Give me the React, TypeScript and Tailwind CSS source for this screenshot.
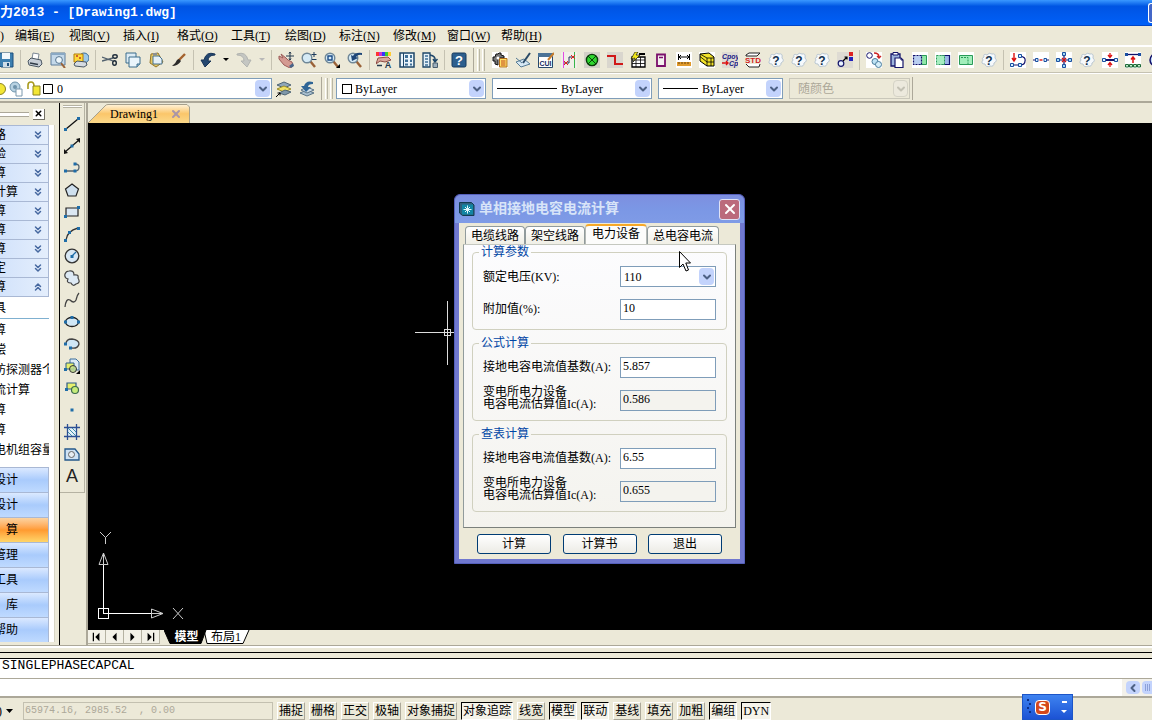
import React from 'react';
import { ChevronDown, ChevronLeft, ChevronsDown, ChevronsUp, X } from 'lucide-react';

const HelpCloud = () => (
  <>
    <path d="M3 5Q2 1 6 3Q8 0 11 2Q15 1 14 6Q17 9 13 11Q13 15 9 14Q5 16 4 12Q-1 12 2 8Q0 6 3 5Z" fill="#f6f9fc" stroke="#b9c6d0" />
    <text x="8" y="12.500" textAnchor="middle" fill="#12304e" className="text-[12px] font-bold font-['Liberation_Sans',sans-serif]">
      ?
    </text>
  </>
);

const Magnifier = () => (
  <>
    <path d="M9.500 9.500L14 15" stroke="#9a6238" strokeWidth="2.400" />
    <circle cx="6" cy="6" r="4.800" fill="#d5eaf5" stroke="#6f8797" strokeWidth="1.400" />
  </>
);

const icons: Record<string, React.ReactNode> = {
  save: (
    <>
      <path d="M1 1H15V15H3L1 13Z" fill="#3d7fb0" stroke="#1d4f7c" />
      <path d="M4 1H12V7H4Z" fill="#f2f8fc" />
      <path d="M5 10H12V15H5Z" fill="#cfdde8" />
      <path d="M9 11H11V14H9Z" fill="#1d4f7c" />
    </>
  ),
  print: (
    <>
      <path d="M5 7L6 1L12 2L11 8Z" fill="#fff" stroke="#7c8894" />
      <path d="M1 9L4 6L14 8L15 12L12 15L2 13Z" fill="#c7ced6" stroke="#4b5763" />
      <path d="M3 11L11 12.500" stroke="#2f3a46" strokeWidth="1.500" />
    </>
  ),
  preview: (
    <>
      <path d="M1 1H15V13H1Z" fill="#c4d9ea" stroke="#5c7d9b" />
      <path d="M1 1H15V3H1Z" fill="#8aa9c4" />
      <path d="M11 11L15 16" stroke="#9a6238" strokeWidth="2" />
      <circle cx="9" cy="8" r="3.400" fill="#eef7fc" stroke="#54748e" />
    </>
  ),
  plot: (
    <>
      <circle cx="11" cy="6" r="5" fill="#9cc9ea" stroke="#3c6d98" />
      <path d="M1 2H10V10H1Z" fill="#ffd83a" stroke="#b37d08" />
      <path d="M3 4H5M6 6H8" stroke="#c0392b" strokeWidth="1.500" />
      <path d="M1 12L4 9L13 10L14 13L11 15L2 14Z" fill="#d5dbe1" stroke="#4b5763" />
    </>
  ),
  cut: (
    <>
      <path d="M0 5L11 9M0 9L11 6" stroke="#53626f" strokeWidth="1.300" />
      <ellipse cx="13" cy="4.500" rx="2.200" ry="1.700" fill="none" stroke="#1e2c3a" strokeWidth="1.400" />
      <ellipse cx="12.500" cy="11" rx="1.800" ry="2.200" fill="none" stroke="#1e2c3a" strokeWidth="1.400" />
    </>
  ),
  copy: (
    <>
      <path d="M1 1H11V11H1Z" fill="#dcebf4" stroke="#3a6c8c" />
      <path d="M4 5H15V12L12 15H4Z" fill="#eaf5fb" stroke="#3a6c8c" />
      <path d="M15 12H12V15" fill="#9bbccf" stroke="#3a6c8c" />
    </>
  ),
  paste: (
    <>
      <path d="M3 2L10 1L15 10L8 15L2 11Z" fill="#e7c763" stroke="#94762a" />
      <path d="M5 4H11L14 7V12H5Z" fill="#e6f1f8" stroke="#47708c" />
      <path d="M5 1H9V3H5Z" fill="#8c8f94" />
    </>
  ),
  brush: (
    <>
      <path d="M14 2L7 9" stroke="#a4622e" strokeWidth="2.400" />
      <path d="M8 7L10 9Q7 14 1 14Q5 11 6 8Z" fill="#2b2b2b" />
    </>
  ),
  undo: <path d="M15 2Q6 -1 4 8H1L5 15L11 9H8Q8 3 15 3Z" fill="#24476f" stroke="#183457" />,
  redo: <path d="M1 2Q10 -1 12 8H15L11 15L5 9H8Q8 3 1 3Z" fill="#c4c6c2" stroke="#b2b4b0" />,
  pan: (
    <>
      <path d="M1 4L5 6L3 2L8 6L10 8L14 10L15 14L12 16L6 13L1 7Z" fill="#d49a92" stroke="#9c5b58" />
      <path d="M11 14L15 11L16 14L13 16Z" fill="#47658a" />
      <path d="M12 0V8M8 4H16M11 1.500L12 0L13 1.500M11 6.500L12 8L13 6.500" stroke="#24384c" fill="none" />
    </>
  ),
  zoom: (
    <>
      <Magnifier />
      <path d="M13 0V5M10.500 2.500H15.500M11 7.500H15.500" stroke="#1c3b5c" />
    </>
  ),
  zoomWindow: (
    <>
      <Magnifier />
      <path d="M4 4H8V8H4Z" fill="none" stroke="#1b4c88" strokeWidth="1.400" />
      <path d="M16 12V16H12Z" fill="#000" />
    </>
  ),
  zoomPrevious: (
    <>
      <Magnifier />
      <path d="M15 1Q8 0 6 4L4 3L5 9L11 6L9 5Q11 2 15 3Z" fill="#1e4678" />
    </>
  ),
  properties: (
    <>
      <path d="M0 0H3V4H0Z" fill="#f33" />
      <path d="M3 0H6V4H3Z" fill="#c3c" />
      <path d="M6 0H9V4H6Z" fill="#33f" />
      <path d="M9 0H12V4H9Z" fill="#3c3" />
      <path d="M12 0H15V4H12Z" fill="#fc3" />
      <path d="M2 6L12 5L15 8L9 10L4 9L0 12Z" fill="#d9a89c" stroke="#8e4c45" />
      <path d="M1 13.500H6" stroke="#24384c" strokeWidth="1.500" />
      <text x="12" y="16" textAnchor="middle" fill="#24384c" className="text-[9px] font-bold font-['Liberation_Sans',sans-serif]">
        A
      </text>
    </>
  ),
  design: (
    <>
      <path d="M1 1H15V15H1Z" fill="#eaf4fb" stroke="#1d4568" strokeWidth="1.500" />
      <path d="M4.500 1V15" stroke="#1d4568" />
      <path d="M6 3H9V6H6ZM11 3H13V6H11ZM6 7.500H9V10H6ZM11 7.500H13V10H11ZM6 11.500H9V13.500H6ZM11 11.500H13V13.500H11Z" fill="#3e6f97" />
    </>
  ),
  toolPalette: (
    <>
      <path d="M1 1H8V15H1Z" fill="#e4f0f8" stroke="#1d4568" strokeWidth="1.300" />
      <path d="M3 4H6M3 7H6M3 10H6M3 13H6" stroke="#3e6f97" strokeWidth="1.500" />
      <path d="M8 3Q14 4 13 9M11 7L13 10L15.500 7" fill="none" stroke="#1d4568" strokeWidth="1.500" />
      <path d="M11 11H15.500V15.500H11Z" fill="#9eb0bd" stroke="#4b5f6e" />
    </>
  ),
  help: (
    <>
      <rect x="1" y="1" width="14" height="14" rx="1.500" fill="#2d5f8e" stroke="#163a5e" />
      <text x="8" y="13" textAnchor="middle" fill="#fff" className="text-[13px] font-bold font-['Liberation_Sans',sans-serif]">
        ?
      </text>
    </>
  ),
  settings: (
    <>
      <path d="M0 0H16V16H0Z" fill="#fff" />
      <path d="M1 5H3L4 2H6L7 1H9V3L12 4V6H6V13L3 12V9H1Z" fill="#777" stroke="#111" />
      <circle cx="6" cy="6" r="1.500" fill="#fff" />
      <path d="M7.500 6.500H15V15H7.500Z" fill="#ffe067" stroke="#b06d19" />
      <path d="M9 9H13.500M9 11H13.500M9 13H13.500" stroke="#c04820" />
    </>
  ),
  sketch: (
    <>
      <path d="M1 10L9 7L15 12L6 15Z" fill="#d6e8f4" stroke="#567b95" />
      <path d="M15 1L8 11" stroke="#2a4a66" strokeWidth="2" />
      <path d="M1 6L7 11" stroke="#567b95" />
    </>
  ),
  cui: (
    <>
      <path d="M.5 1.500H14.500V15.500H.5Z" fill="#fff" stroke="#27496d" />
      <path d="M0 1H15V5H0Z" fill="#4b7397" />
      <text x="7.500" y="14" textAnchor="middle" fill="#142b5e" className="text-[7px] font-bold font-['Liberation_Sans',sans-serif]">
        CUI
      </text>
      <path d="M16 1L10 8" stroke="#c77d2d" strokeWidth="2" />
    </>
  ),
  signal: (
    <>
      <path d="M0 0H16V16H0Z" fill="#f1efe8" />
      <path d="M2.500 0V16" stroke="#e24be2" />
      <path d="M13.500 0V16" stroke="#39b54a" />
      <path d="M3 11H8V5H13" fill="none" stroke="#20325a" />
      <path d="M3 9L7 13M7 9L3 13M10 3L14 7M14 3L10 7" stroke="#d22" />
    </>
  ),
  lamp: (
    <>
      <path d="M0 0H16V16H0Z" fill="#d3d0c8" />
      <circle cx="8" cy="8" r="5.600" fill="#2fd62f" stroke="#0a3d0a" strokeWidth="1.400" />
      <path d="M4 4L12 12M12 4L4 12" stroke="#0a3d0a" />
    </>
  ),
  wire: (
    <>
      <path d="M0 0H16V16H0Z" fill="#d9d6ce" />
      <path d="M0 4H8V12H16" fill="none" stroke="#d01818" strokeWidth="2" />
    </>
  ),
  table: (
    <>
      <path d="M2 5H15V15H2Z" fill="#fff" stroke="#000" strokeWidth="1.300" />
      <path d="M2 8H15M2 11.500H15M6 5V15M10.500 5V15" stroke="#000" strokeWidth=".8" />
      <path d="M5 0L1 7L5 6L3 10L10 3H6L8 0Z" fill="#f2e91c" stroke="#000" strokeWidth=".6" />
      <path d="M9 2H15" stroke="#000" strokeWidth="2" />
    </>
  ),
  socket: (
    <>
      <path d="M4 2.500H12V14H4Z" fill="#f4f0ef" stroke="#7b0f6b" strokeWidth="1.800" />
      <path d="M6 5.500H10" stroke="#7b0f6b" strokeWidth="1.500" />
    </>
  ),
  measure: (
    <>
      <path d="M0 0H16V16H0Z" fill="#fff" />
      <path d="M2.500 2V8M13.500 2V8M3 5H13M5 3L3 5L5 7M11 3L13 5L11 7" fill="none" stroke="#000" />
      <path d="M1 10H15V14H1Z" fill="#e09a2c" />
      <path d="M3 10V12M6 10V12M9 10V12M12 10V12" stroke="#6b430b" />
    </>
  ),
  layers: (
    <>
      <path d="M0 0H16V16H0Z" fill="#fff" />
      <path d="M1 2L10 1L15 5V14H8L1 9Z" fill="#f3e328" stroke="#000" />
      <path d="M1 4.500L8 10H15M1 2L8 6H15M8 6V14M12 6V14" fill="none" stroke="#000" strokeWidth=".8" />
    </>
  ),
  copyProps: (
    <>
      <path d="M0 0H16V16H0Z" fill="#dedbd3" />
      <text x="0" y="7" fill="#1a1a86" className="text-[7px] italic font-bold font-['Liberation_Sans',sans-serif]">
        Cpoy
      </text>
      <path d="M0 11H6M4 9L6 11L4 13" fill="none" stroke="#d11" strokeWidth="1.400" />
      <text x="7" y="14" fill="#1a1a86" className="text-[7px] italic font-bold font-['Liberation_Sans',sans-serif]">
        Cp
      </text>
    </>
  ),
  standard: (
    <>
      <path d="M1 3L4 1H15L12 4H1ZM1 12L4 15H14L15 12" fill="#fff" stroke="#222" />
      <text x="8" y="11" textAnchor="middle" fill="#d01f1f" className="text-[8px] font-bold font-['Liberation_Sans',sans-serif]">
        STD
      </text>
    </>
  ),
  cloud: <HelpCloud />,
  nodes: (
    <>
      <path d="M0 0H16V16H0Z" fill="#dedbd3" />
      <circle cx="4" cy="11.500" r="2.800" fill="#e9f3ff" stroke="#16166b" strokeWidth="1.200" />
      <path d="M6 9L10 5M7.500 5H10V7.500" fill="none" stroke="#000" strokeWidth="1.200" />
      <path d="M12 0H16V4H12Z" fill="#d22" />
      <path d="M12 5H16V9H12Z" fill="#22b" />
    </>
  ),
  replace: (
    <>
      <path d="M0 0H16V16H0Z" fill="#fff" />
      <circle cx="3.500" cy="3.500" r="2.800" fill="#fff" stroke="#16166b" />
      <path d="M8 1Q13 1 13 5M11 4L13 6L15 4" fill="none" stroke="#c22" strokeWidth="1.300" />
      <circle cx="9" cy="9.500" r="3" fill="#bfe3f4" stroke="#4a7c9c" />
      <circle cx="12.500" cy="12.500" r="3" fill="#d5eef9" stroke="#4a7c9c" />
    </>
  ),
  clipboard: (
    <>
      <path d="M2 2H11V14H2Z" fill="#9db4dc" stroke="#16166b" strokeWidth="1.300" />
      <path d="M4 .5H9V3H4Z" fill="#fff" stroke="#16166b" />
      <path d="M6 6H12L14 8V15.500H6Z" fill="#fff" stroke="#16166b" strokeWidth="1.200" />
      <path d="M12 6V8H14" fill="none" stroke="#16166b" />
    </>
  ),
  blockA: (
    <>
      <path d="M0 0H16V16H0Z" fill="#fff" />
      <path d="M8 3.500H14.500V12.500H8Z" fill="#8fe6a8" stroke="#2a9a58" />
      <path d="M1.500 3.500H9.500V12.500H1.500Z" fill="#b9cef0" stroke="#10106a" strokeDasharray="2 1" strokeWidth="1.200" />
    </>
  ),
  blockB: (
    <>
      <path d="M0 0H16V16H0Z" fill="#fff" />
      <path d="M7 3.500H14.500V12.500H7Z" fill="#9cb6e6" stroke="#10106a" strokeWidth="1.200" />
      <path d="M1.500 3.500H9.500V12.500H1.500Z" fill="#a6eec0" stroke="#2a9a58" strokeDasharray="2 1" />
    </>
  ),
  blockC: (
    <>
      <path d="M0 0H16V16H0Z" fill="#fff" />
      <path d="M1.500 3.500H14.500V12.500H1.500Z" fill="#a2eebb" stroke="#2a9a58" />
      <path d="M3 5.500H10V12" fill="none" stroke="#2a9a58" strokeDasharray="2 1" />
    </>
  ),
  loop: (
    <>
      <path d="M0 0H16V16H0Z" fill="#fff" />
      <path d="M4 1V8M2 6L4 9L6 6" fill="none" stroke="#d11" strokeWidth="1.400" />
      <path d="M10 4Q16 5 15 9Q15 13 10 13H3" fill="none" stroke="#10106a" strokeWidth="1.200" />
      <path d="M8.500 2.500H11.500V5.500H8.500ZM.5 11.500H3.500V14.500H.5ZM8.500 11.500H11.500V14.500H8.500Z" fill="#d8f1ff" stroke="#1a4fa0" />
    </>
  ),
  dashNode: (
    <>
      <path d="M0 0H16V16H0Z" fill="#fff" />
      <path d="M0 8H5M11 8H16" stroke="#10106a" />
      <path d="M6.500 8H9.500" stroke="#d11" strokeWidth="1.400" />
      <path d="M2.500 6.500H5V9.500H2.500ZM11 6.500H13.500V9.500H11Z" fill="#d8f1ff" stroke="#1a4fa0" />
    </>
  ),
  crossNode: (
    <>
      <path d="M0 0H16V16H0Z" fill="#fff" />
      <path d="M8 2V14M2 8H14" stroke="#10106a" strokeWidth="1.200" />
      <path d="M6 6L10 10M10 6L6 10" stroke="#d11" strokeWidth="1.200" />
      <path d="M6.500 .5H9.500V3.500H6.500ZM6.500 12.500H9.500V15.500H6.500ZM.5 6.500H3.500V9.500H.5ZM12.500 6.500H15.500V9.500H12.500Z" fill="#9fd9f4" stroke="#1a4fa0" />
    </>
  ),
  splitNode: (
    <>
      <path d="M0 0H16V16H0Z" fill="#fff" />
      <path d="M2 8H14" stroke="#10106a" strokeWidth="2" />
      <path d="M8 1V5M6 3L8 5.500L10 3M8 15V11M6 13L8 10.500L10 13" fill="none" stroke="#d11" strokeWidth="1.300" />
      <path d="M.5 6.500H3.500V9.500H.5ZM12.500 6.500H15.500V9.500H12.500Z" fill="#d8f1ff" stroke="#1a4fa0" />
    </>
  ),
  liftNode: (
    <>
      <path d="M0 0H16V16H0Z" fill="#fff" />
      <path d="M1 2.500H15" stroke="#10106a" strokeWidth="1.300" />
      <path d="M8 11V5M6 7.500L8 5L10 7.500" fill="none" stroke="#d11" strokeWidth="1.500" />
      <path d="M0 1H3V4H0ZM13 1H16V4H13Z" fill="#1a4fa0" />
      <path d="M.5 12.500H3.500V15H.5ZM4.500 12.500H7.500V15H4.500ZM8.500 12.500H11.500V15H8.500ZM12.500 12.500H15.500V15H12.500Z" fill="#c8f0d0" stroke="#1e6a38" />
    </>
  ),
  ring: <circle cx="8" cy="8" r="6" fill="#bcd6f4" stroke="#10106a" strokeWidth="1.500" />,

  line: <><path d="M2 13L14 3" stroke="#111" strokeWidth="1.300" /><path d="M0 12H3V15H0ZM13 1H16V4H13Z" fill="#1f6da8" /></>,
  xline: <><path d="M1 14L15 2" stroke="#111" strokeWidth="1.200" /><path d="M0 16V11L4 15ZM16 0V5L12 1Z" fill="#111" /><path d="M6.500 6.500H9.500V9.500H6.500Z" fill="#1f6da8" /></>,
  polyline: <><path d="M2 11H11M11 4Q15 4 15 7Q15 11 11 11" fill="none" stroke="#53636f" strokeWidth="1.300" /><path d="M0 9.500H3V12.500H0ZM9.500 9.500H12.500V12.500H9.500ZM9.500 2.500H12.500V5.500H9.500Z" fill="#1f6da8" /></>,
  polygon: <path d="M8 2L14.500 7L12 14H4L1.500 7Z" fill="#cfe0ee" stroke="#222" strokeWidth="1.200" />,
  rectangle: <><path d="M2 4H14V12H2Z" fill="#dbe7f2" stroke="#222" strokeWidth="1.200" /><path d="M0 11H3V14H0ZM13 2H16V5H13Z" fill="#1f6da8" /></>,
  arc: <><path d="M2 14Q3 5 14 2" fill="none" stroke="#333" strokeWidth="1.300" /><path d="M0 13H3V16H0ZM4 5H7V8H4ZM13 1H16V4H13Z" fill="#1f6da8" /></>,
  circle: <><circle cx="8" cy="8" r="6.800" fill="#d8e7f4" stroke="#333" strokeWidth="1.300" /><path d="M8 8L12 4" stroke="#1f6da8" strokeWidth="1.200" /><path d="M6.500 7H9.500V10H6.500Z" fill="#1f6da8" /></>,
  revcloud: <path d="M5 1Q10 0 10 5Q15 4 14 8Q17 13 12 14Q9 17 7 13Q2 13 4 9Q0 8 1 4Q2 1 5 1Z" fill="#dde9f4" stroke="#444" strokeWidth="1.200" />,
  spline: <path d="M1 15Q2 6 6 8Q10 12 12 8Q13 3 15 1" fill="none" stroke="#444" strokeWidth="1.300" />,
  ellipse: <><ellipse cx="8" cy="8" rx="6.500" ry="4.500" fill="#d0e7f6" stroke="#222" strokeWidth="1.300" /><path d="M0 6.500H3V9.500H0ZM13 6.500H16V9.500H13ZM6.500 2H9.500V5H6.500Z" fill="#1f6da8" /></>,
  ellipseArc: <><path d="M2 8Q2 3 8 3Q15 4 15 8Q14 13 7 12" fill="#d0e7f6" stroke="#444" strokeWidth="1.300" /><path d="M0 6.500H3V9.500H0ZM5 10.500H8V13.500H5Z" fill="#1f6da8" /></>,
  insertBlock: <><path d="M6 1H12L15 4V12H6Z" fill="#dceaf6" stroke="#3d6f9c" /><path d="M2 5H10V11H2Z" fill="#e7f06d" stroke="#2d5c88" /><circle cx="9" cy="11" r="3.500" fill="#c3e08a" fillOpacity=".8" stroke="#333" /><path d="M0 10H3V13H0Z" fill="#1f6da8" /><path d="M16 12V16H12Z" fill="#000" /></>,
  makeBlock: <><path d="M3 3H12V9H3Z" fill="#e7f06d" stroke="#2d5c88" strokeWidth="1.200" /><circle cx="11" cy="10" r="3.500" fill="#c6ec7a" stroke="#3b6b4c" strokeWidth="1.200" /><path d="M1 8H4V11H1Z" fill="#1f6da8" /></>,
  point: <path d="M6.500 6.500H9.500V9.500H6.500Z" fill="#1f6da8" />,
  hatch: <><path d="M4 4H13V12H4Z" fill="#e6f1f9" /><path d="M3.500 0V16M12.500 0V16M0 3.500H16M0 12.500H16" stroke="#2c4f93" strokeWidth="1.300" /><path d="M4 8L8 12M4 4L12 12M8 4L12 8" stroke="#3f8da8" /></>,
  region: <><path d="M1 3H11L15 8V14H1Z" fill="#cfe3f5" stroke="#25588b" strokeWidth="1.300" /><circle cx="7.500" cy="8.500" r="3" fill="#e7edf2" stroke="#666" /></>,
  text: (
    <text x="8" y="14" textAnchor="middle" fill="#222" className="text-[18px] font-['Liberation_Sans',sans-serif]">
      A
    </text>
  ),

  layerPrev: <><path d="M1 4L8 1L15 4L8 7Z" fill="#8fa6b8" stroke="#4e6575" /><path d="M1 8L8 5L15 8L8 11Z" fill="#f0e063" stroke="#9c8f2a" /><path d="M3 12L9 9L15 11L9 14Z" fill="#7f97a9" stroke="#4e6575" /><path d="M0 16L4 12M1.500 12H4V14.500" stroke="#000" fill="none" /></>,
  layerBack: <><path d="M1 12L8 9L15 12L8 15Z" fill="#a9bfcf" stroke="#5a7487" /><path d="M2 9L8 6L15 9L8 12Z" fill="#cfdde7" stroke="#5a7487" /><path d="M14 1Q7 -1 5 5H2L7 11L12 6H9Q9 3 14 3Z" fill="#2f6596" /></>,
};

function Icon({ name }: { name: string }) {
  return (
    <svg viewBox="0 0 16 16" className="w-4 h-4 shrink-0">
      {icons[name]}
    </svg>
  );
}

const menus = [
  ['编辑', 'E'],
  ['视图', 'V'],
  ['插入', 'I'],
  ['格式', 'O'],
  ['工具', 'T'],
  ['绘图', 'D'],
  ['标注', 'N'],
  ['修改', 'M'],
  ['窗口', 'W'],
  ['帮助', 'H'],
];

// '|' is a separator, 'v' is a small drop-down arrow
const standardTools = '| print preview plot | cut copy paste brush | undo v redo v | pan zoom zoomWindow zoomPrevious | properties design toolPalette | help'.split(' ');
const electricTools =
  'settings sketch cui signal lamp wire table socket measure layers copyProps standard cloud cloud cloud nodes | replace clipboard blockA blockB blockC cloud | loop dashNode crossNode cloud splitNode liftNode ring'.split(' ');
const drawTools =
  'line xline polyline polygon rectangle arc circle revcloud spline ellipse ellipseArc insertBlock makeBlock point hatch region text'.split(' ');

const categories = [
  ['线路', 'w-[6px]'],
  ['校验', 'w-[6px]'],
  ['计算', 'w-[6px]'],
  ['计算', 'w-[18px]'],
  ['计算', 'w-[6px]'],
  ['计算', 'w-[6px]'],
  ['计算', 'w-[6px]'],
  ['整定', 'w-[6px]'],
  ['计算', 'w-[6px]'],
];

const entries = [
  ['计算', 'w-[6px]'],
  ['补偿', 'w-[6px]'],
  ['防探测器个', 'w-[54px]'],
  ['流计算', 'w-[30px]'],
  ['计算', 'w-[6px]'],
  ['计算', 'w-[6px]'],
  ['电机组容量', 'w-[54px]'],
];

const sections = ['设计', '设计', '算', '管理', '工具', '库', '帮助'];

const statusItems = [
  { label: '捕捉' },
  { label: '栅格' },
  { label: '正交' },
  { label: '极轴' },
  { label: '对象捕捉' },
  { label: '对象追踪', on: true },
  { label: '线宽' },
  { label: '模型', on: true },
  { label: '联动', on: true },
  { label: '基线' },
  { label: '填充' },
  { label: '加粗' },
  { label: '编组', on: true },
  { label: 'DYN', on: true },
];

function Tools({ names }: { names: string[] }) {
  return (
    <>
      {names.map((name, i) => {
        if (name === '|') {
          return (
            <div key={i} className="w-[6px] shrink-0 flex justify-center">
              <div className="w-px h-5 bg-[#c5c2b2]" />
            </div>
          );
        }
        if (name === 'v') {
          return (
            <button key={i} aria-label="more" className="w-[13px] shrink-0 flex justify-center">
              <svg viewBox="0 0 6 4" className={`w-[6px] h-1 ${i > 12 ? 'text-[#b8b8b8]' : 'text-black'}`}>
                <path d="M0 0H6L3 3Z" fill="currentColor" />
              </svg>
            </button>
          );
        }
        return (
          <button key={i} aria-label={name} className="w-[23px] h-[22px] shrink-0 flex items-center justify-center">
            <Icon name={name} />
          </button>
        );
      })}
    </>
  );
}

function Grip() {
  return (
    <div className="flex gap-[2px] shrink-0 h-full px-[3px] py-px">
      <div className="w-[3px] border-l border-white border-r border-r-[#b9b6a5]" />
      <div className="w-[3px] border-l border-white border-r border-r-[#b9b6a5]" />
    </div>
  );
}

type ComboProps = {
  label: string;
  value: string;
  className: string;
  disabled?: boolean;
  children?: React.ReactNode;
};

function Combo({ label, value, className, disabled, children }: ComboProps) {
  return (
    <div
      className={`flex items-center h-[21px] shrink-0 border pr-px ${className} ${
        disabled ? 'border-[#c9c7ba] bg-[#ece9d8]' : 'border-[#7f9db9] bg-white'
      }`}
    >
      {children}
      <select
        aria-label={label}
        disabled={disabled}
        defaultValue={value}
        className={`appearance-none flex-1 min-w-0 h-full bg-transparent outline-none ${disabled ? 'pl-2 text-[#aca899]' : 'pl-[3px] text-black'}`}
      >
        <option>{value}</option>
      </select>
      <span
        className={`w-[15px] h-[17px] flex items-center justify-center rounded-sm pointer-events-none ${
          disabled ? 'bg-[#ece9dd] border border-[#d5d3c6] text-[#c3c1b4]' : 'bg-[#c3d3fc] text-[#4d6185]'
        }`}
      >
        <ChevronDown size={12} strokeWidth={4} />
      </span>
    </div>
  );
}

function SidePanel() {
  return (
    <aside className="w-[60px] shrink-0 border-r border-black flex flex-col bg-[#ece9d8]">
      <div className="flex items-center h-[22px] shrink-0 gap-1 pr-[14px]">
        <div className="flex-1 h-[5px] border-y border-[#aca899] bg-white" />
        <button aria-label="close" className="w-[12px] h-[11px] bg-white border-r border-b border-[#716f64] flex items-center justify-center">
          <X size={9} strokeWidth={4} />
        </button>
      </div>
      <div className="flex-1 min-h-0 flex flex-col overflow-hidden mr-1 pr-[5px] bg-white border-r border-[#d8d5c4]">
        {categories.map(([name, width], i) => (
          <button
            key={i}
            className="h-[19px] shrink-0 flex items-center justify-between pr-1 border-t border-r border-[#a9b8d4] bg-linear-to-r from-[#d3e3fb] to-[#e4eefc]"
          >
            <span className={`${width} flex justify-end overflow-hidden whitespace-nowrap`}>{name}</span>
            {i === 8 ? (
              <ChevronsUp size={12} strokeWidth={3} className="text-[#4668a0]" />
            ) : (
              <ChevronsDown size={12} strokeWidth={3} className="text-[#4668a0]" />
            )}
          </button>
        ))}
        <div className="flex-1 min-h-0 border-t border-[#a9b8d4] overflow-hidden">
          <div className="h-[22px] mb-px flex items-center border-b border-[#7fb0d0]">
            <span className="w-[6px] flex justify-end overflow-hidden whitespace-nowrap">工具</span>
          </div>
          {entries.map(([name, width], i) => (
            <a key={i} href="#" className="h-5 flex items-center">
              <span className={`${width} flex shrink-0 justify-end overflow-hidden whitespace-nowrap`}>{name}</span>
            </a>
          ))}
        </div>
        {sections.map((name, i) => (
          <button
            key={i}
            className={`h-[25px] shrink-0 flex items-center border-t border-r border-[#a9b8d4] ${
              i === 2
                ? 'bg-linear-to-b from-[#fbd3a0] via-[#ff9a30] to-[#ffd568]'
                : 'bg-linear-to-b from-[#dbe9ff] via-[#a9cbfc] to-[#bfdaff]'
            }`}
          >
            <span className="w-[18px] flex justify-end overflow-hidden whitespace-nowrap">{name}</span>
          </button>
        ))}
      </div>
      <div className="h-[3px] shrink-0" />
    </aside>
  );
}

type FieldProps = { id: string; label: React.ReactNode; value: string; readOnly?: boolean };

function Field({ id, label, value, readOnly }: FieldProps) {
  return (
    <div className="flex items-center h-[21px]">
      <label htmlFor={id} className={`flex-1 whitespace-nowrap leading-3 ${readOnly ? 'pb-[6px]' : 'pb-[2px]'}`}>
        {label}
      </label>
      <input
        id={id}
        defaultValue={value}
        readOnly={readOnly}
        className={`w-24 h-[21px] pl-[2px] pb-[2px] border border-[#7f9db9] outline-none ${readOnly ? 'bg-[#f4f3ee]' : 'bg-white'}`}
      />
    </div>
  );
}

function Group({ title, children }: { title: string; children: React.ReactNode }) {
  return (
    <fieldset className="border border-[#d0d0bf] rounded-sm px-[10px] pt-[7px] pb-[9px]">
      <legend className="-ml-1 px-[2px] leading-[14px] text-[#0046a5]">{title}</legend>
      <div className="flex flex-col gap-3">{children}</div>
    </fieldset>
  );
}

const estimateLabel = (
  <>
    变电所电力设备
    <br />
    电容电流估算值Ic(A):
  </>
);

function CapacitanceDialog() {
  const tabs = ['电缆线路', '架空线路', '电力设备', '总电容电流'];

  return (
    <div
      role="dialog"
      aria-label="单相接地电容电流计算"
      className="absolute left-[366px] top-[71px] w-[291px] rounded-t-md bg-[#7078cf] border border-[#5560bb] px-1 pb-1"
    >
      <div className="flex items-center h-7 -mx-1 px-1 rounded-t-md bg-linear-to-b from-[#7d8fe0] via-[#7b97e5] to-[#7f9be6]">
        <svg viewBox="0 0 16 16" className="w-4 h-4">
          <path d="M.5 1.500H12.500L15 4V14.500H3.500L.5 12Z" fill="#2f5f7c" stroke="#123c50" />
          <rect x="3" y="3.500" width="11" height="10" fill="#1286a4" />
          <path d="M8.500 4.500V12.500M4.500 8.500H12.500M6 6L11 11M11 6L6 11" stroke="#e3f8fc" />
        </svg>
        <span className="flex-1 pl-1 text-[14px] font-bold text-[#d8e4f8]">单相接地电容电流计算</span>
        <button aria-label="close" className="w-[21px] h-[21px] rounded-[3px] border border-[#dfe3f6] bg-[#bb6a7c] text-white flex items-center justify-center">
          <X size={16} strokeWidth={3} />
        </button>
      </div>
      <div className="bg-[#ece9d8] px-1 pt-px pb-1">
        <div role="tablist" className="flex items-end h-5 pl-[2px] pr-4">
          {tabs.map(tab =>
            tab === '电力设备' ? (
              <button key={tab} role="tab" className="h-5 px-[6px] pb-[2px] border border-b-0 border-t-2 border-[#b5b9b5] border-t-[#f6a828] bg-[#fcfcfb] rounded-t-sm whitespace-nowrap">
                {tab}
              </button>
            ) : (
              <button key={tab} role="tab" className="h-[18px] px-[5px] border border-b-0 border-[#919b9c] bg-linear-to-b from-white to-[#f0efe6] rounded-t-sm whitespace-nowrap">
                {tab}
              </button>
            )
          )}
        </div>
        <div className="border border-t-[#c5c8c0] border-l-[#919b9c] border-r-[#7b807c] border-b-[#7b807c] bg-linear-to-b from-[#fcfcfe] to-[#f4f3ee] px-2 pb-[15px] flex flex-col gap-[6px]">
          <Group title="计算参数">
            <div className="flex items-center h-[21px]">
              <span className="flex-1 whitespace-nowrap">额定电压(KV):</span>
              <Combo label="额定电压(KV)" value="110" className="w-24" />
            </div>
            <Field id="extra" label="附加值(%):" value="10" />
          </Group>
          <Group title="公式计算">
            <Field id="formula-base" label="接地电容电流值基数(A):" value="5.857" />
            <Field id="formula-ic" label={estimateLabel} value="0.586" readOnly />
          </Group>
          <Group title="查表计算">
            <Field id="table-base" label="接地电容电流值基数(A):" value="6.55" />
            <Field id="table-ic" label={estimateLabel} value="0.655" readOnly />
          </Group>
        </div>
        <div className="flex justify-between px-[14px] pt-[6px] pb-px">
          {['计算', '计算书', '退出'].map(text => (
            <button key={text} className="w-[74px] h-5 border border-[#003c74] rounded-[3px] bg-linear-to-b from-white to-[#ecebe5] leading-none">
              {text}
            </button>
          ))}
        </div>
      </div>
    </div>
  );
}

function Canvas() {
  return (
    <main className="relative flex-1 min-h-0 bg-black overflow-hidden">
      <svg viewBox="0 0 39 64" className="absolute left-[327px] top-[178px] w-[39px] h-16" fill="none" stroke="#ddd" shapeRendering="crispEdges">
        <path d="M0 31.500H39M32.500 0V64" />
        <path d="M29.500 28.500H35.500V34.500H29.500Z" />
      </svg>
      <svg viewBox="0 0 90 94" className="absolute left-2 bottom-[8px] w-[90px] h-[94px]" fill="none" stroke="#fff">
        <path d="M2.500 80.500H12.500V90.500H2.500ZM7.500 85.500V32M7.500 85.500H67" shapeRendering="crispEdges" />
        <path d="M7.500 25L3 36.500H12ZM7.500 25V36" stroke="#ccc" />
        <path d="M67 85.500L55.500 81V90ZM55 85.500H67" stroke="#ccc" />
        <path d="M4 4L9.500 9.500L15 4M9.500 9.500V16M77 80L87 91M87 80L77 91" stroke="#ccc" />
      </svg>
      <CapacitanceDialog />
      <svg viewBox="0 0 13 21" className="absolute left-[591px] top-[128px] w-[13px] h-[21px]">
        <path d="M.5 .5V16.500L4 13L7 20L9.500 19L6.800 12H11.500Z" fill="#fff" stroke="#000" />
      </svg>
    </main>
  );
}

function SheetTabs() {
  const arrows = ['M1 1H2.500V11H1ZM9 1V11L4 6Z', 'M8 1V11L3 6Z', 'M3 1V11L8 6Z', 'M2 1V11L7 6ZM8.500 1H10V11H8.500Z'];

  return (
    <div className="flex h-[15px] shrink-0 bg-[#ece9d8]">
      {arrows.map(d => (
        <button key={d} aria-label="sheet" className="w-[18px] h-[14px] bg-[#f3f1e7] border-r border-b border-[#b5b2a2] flex items-center justify-center">
          <svg viewBox="0 0 11 12" className="w-[11px] h-[10px]">
            <path d={d} fill="#000" />
          </svg>
        </button>
      ))}
      <div className="relative flex w-[90px] ml-1">
        <svg viewBox="0 0 90 15" className="absolute inset-0 w-[90px] h-[15px]">
          <path d="M40 0L43 13.500H79L85 0" fill="#fff" stroke="#000" />
          <path d="M0 0L6 13.500H37L42 0Z" fill="#000" stroke="#000" />
        </svg>
        <button className="relative w-10 pl-[5px] leading-[13px] font-bold text-white whitespace-nowrap">模型</button>
        <button className="relative w-10 pl-1 leading-[13px] whitespace-nowrap">布局1</button>
      </div>
    </div>
  );
}

function App() {
  return (
    <div className="h-screen flex flex-col overflow-hidden bg-[#ece9d8] text-black text-[12px] leading-[14px] select-none font-['Liberation_Serif','Noto_Sans_CJK_SC',serif]">
      <header className="h-[26px] shrink-0 flex items-center bg-linear-to-b from-[#3a98ff] via-[#0054e3] via-25% to-[#0060f8] border-b border-[#0045c8] overflow-hidden">
        <h1 className="flex-1 flex items-center text-white text-[13px] font-bold whitespace-pre font-['Liberation_Mono','Noto_Sans_CJK_SC',monospace]">
          力2013 - [Drawing1.dwg]
        </h1>
        <button aria-label="minimize" className="w-1 h-5 rounded-l-[3px] border border-r-0 border-white bg-[#4467c8]" />
      </header>

      <nav className="h-[19px] shrink-0 flex items-center overflow-hidden">
        <span className="w-[15px] shrink-0">)</span>
        {menus.map(([name, key]) => (
          <button key={key} className="w-[54px] shrink-0 text-left whitespace-nowrap">
            {name}(<u>{key}</u>)
          </button>
        ))}
      </nav>

      <div className="h-[28px] pt-px shrink-0 flex items-center border-t-2 border-t-white border-b border-b-[#c5c2b2] overflow-hidden">
        <button aria-label="save" className="w-[17px] shrink-0 flex justify-start overflow-hidden">
          <span className="w-[14px] flex justify-end overflow-hidden">
            <Icon name="save" />
          </span>
        </button>
        <Tools names={standardTools} />
        <div className="w-[4px] h-full shrink-0 border-r border-[#aca899]" />
        <Grip />
        <Tools names={electricTools} />
      </div>

      <div className="h-[30px] pt-[3px] pb-px shrink-0 flex items-center border-t border-t-white border-b-2 border-b-[#aca899] overflow-hidden">
        <Combo label="图层" value="0" className="w-[272px] border-l-0">
          <svg viewBox="0 0 54 16" className="w-[54px] h-4 shrink-0">
            <circle cx="0" cy="8" r="5.500" fill="#f2e635" stroke="#8c8320" />
            <circle cx="15" cy="6" r="5" fill="#b8d2e2" stroke="#6e93ab" />
            <circle cx="15" cy="6" r="2" fill="#6e93ab" />
            <path d="M16 8H22V15H16Z" fill="#fff" stroke="#7b98ad" />
            <path d="M28 8V4Q28 1 31 1Q34 1 34 5V7" fill="none" stroke="#a99b1d" strokeWidth="1.600" />
            <path d="M33 5H40V14H33Z" fill="#f2e635" stroke="#8c8320" />
            <path d="M43.500 3.500H52.500V12.500H43.500Z" fill="#fff" stroke="#000" />
          </svg>
        </Combo>
        <button aria-label="layer previous" className="w-[23px] shrink-0 flex justify-center">
          <Icon name="layerPrev" />
        </button>
        <button aria-label="layer restore" className="w-[23px] shrink-0 flex justify-center">
          <Icon name="layerBack" />
        </button>
        <div className="w-[4px] h-full shrink-0 border-r border-[#aca899]" />
        <Grip />
        <Combo label="颜色" value="ByLayer" className="w-[150px]">
          <span className="w-[10px] h-[10px] ml-[5px] border border-black" />
        </Combo>
        <div className="w-[6px] shrink-0" />
        <Combo label="线型" value="ByLayer" className="w-[160px]">
          <span className="w-[60px] h-px ml-1 mr-px bg-black" />
        </Combo>
        <div className="w-[6px] shrink-0" />
        <Combo label="线宽" value="ByLayer" className="w-[125px]">
          <span className="w-[35px] h-px ml-1 mr-px bg-black" />
        </Combo>
        <div className="w-[6px] shrink-0" />
        <Combo label="打印样式" value="随颜色" className="w-[121px]" disabled />
        <div className="w-[3px] h-full shrink-0 border-r border-[#aca899]" />
      </div>

      <div className="flex-1 min-h-0 flex border-b border-[#aca899]">
        <SidePanel />
        <div className="w-7 shrink-0 border-r-2 border-[#aca899]">
          <div className="w-[25px] border-r border-b border-[#b5b2a2] pb-[5px] flex flex-col items-center">
            <div className="w-[19px] h-[3px] mt-[2px] mb-[5px] shrink-0 border-y border-[#b5b2a2] bg-white" />
            {drawTools.map(name => (
              <button key={name} aria-label={name} className="w-[22px] h-[22px] shrink-0 flex items-center justify-center">
                <Icon name={name} />
              </button>
            ))}
          </div>
        </div>
        <div className="flex-1 min-w-0 flex flex-col">
          <div className="h-[20px] shrink-0 flex items-end">
            <div className="relative w-[102px] h-[19px] flex items-center pl-[22px]">
              <svg viewBox="0 0 102 19" className="absolute inset-0 w-full h-full">
                <defs>
                  <linearGradient id="doc-tab" x1="0" y1="0" x2="0" y2="1">
                    <stop offset="0" stopColor="#fff3da" />
                    <stop offset="0.500" stopColor="#fbc66a" />
                    <stop offset="1" stopColor="#fbd98a" />
                  </linearGradient>
                </defs>
                <path d="M0 19L17 2Q18 .5 20 .5H99L101.500 3V19" fill="url(#doc-tab)" stroke="#a6a08c" />
              </svg>
              <button className="relative flex-1 text-left leading-none">Drawing1</button>
              <button aria-label="close tab" className="relative pr-2 text-[#a995a8]">
                <X size={12} strokeWidth={4} />
              </button>
            </div>
          </div>
          <Canvas />
          <SheetTabs />
        </div>
      </div>

      <div className="h-[7px] shrink-0 border-t-2 border-white border-b border-b-black">
        <div className="h-[3px]" />
      </div>
      <div className="h-[6px] shrink-0 border-b border-black" />
      <section className="shrink-0 bg-white">
        <div className="h-[20px] px-[2px] border-b border-[#aca899] text-[13px] font-['Liberation_Mono',monospace]">SINGLEPHASECAPCAL</div>
        <div className="h-[17px] flex">
          <input aria-label="命令" className="flex-1 min-w-0 outline-none" />
          <div className="w-[30px] shrink-0 flex items-center gap-[2px] pl-1 bg-[#f3f1ea]">
            <button aria-label="scroll left" className="w-[14px] h-[13px] rounded-sm bg-[#c3d3fc] text-[#4d6185] flex items-center justify-center">
              <ChevronLeft size={12} strokeWidth={4} />
            </button>
            <div className="flex-1 h-[13px] rounded-l-sm bg-[#c3d3fc] flex items-center justify-center gap-px">
              <i className="w-px h-[7px] bg-[#8ca0d8]" />
              <i className="w-px h-[7px] bg-[#8ca0d8]" />
              <i className="w-px h-[7px] bg-[#8ca0d8]" />
            </div>
          </div>
        </div>
      </section>

      <footer className="relative h-6 shrink-0 flex items-center gap-1 pt-1 border-t-2 border-[#aca899]">
        <button aria-label="coordinates" className="w-[19px] shrink-0 flex items-center gap-1">
          <span className="w-[2px] flex justify-end overflow-hidden">)</span>
          <svg viewBox="0 0 7 4" className="w-[7px] h-1">
            <path d="M0 0H7L3.500 4Z" fill="#000" />
          </svg>
        </button>
        <div className="w-[250px] h-[18px] shrink-0 border border-[#c3c0b0] pl-px flex items-center whitespace-pre text-[10px] text-[#aca899] font-['Liberation_Mono',monospace]">
          65974.16, 2985.52  , 0.00
        </div>
        {statusItems.map(({ label, on }) => (
          <button
            key={label}
            className={`h-[18px] px-px shrink-0 border leading-none whitespace-nowrap ${
              on ? 'border-t-black border-l-black border-r-white border-b-white bg-[#f5f3ea]' : 'border-t-white border-l-white border-r-[#aca899] border-b-[#aca899]'
            }`}
          >
            {label}
          </button>
        ))}
        <div className="absolute right-[79px] bottom-0 w-[51px] h-[26px] flex items-center px-1 bg-linear-to-b from-[#3f83f0] to-[#1c52d4] border border-[#1c55c8]">
          <svg viewBox="0 0 4 16" className="w-1 h-4">
            <path d="M0 0H2V2H0ZM2 4H4V6H2ZM0 8H2V10H0ZM2 12H4V14H2Z" fill="#0a2f8c" />
          </svg>
          <button aria-label="input method" className="w-[15px] h-[15px] ml-1 mr-auto rounded-sm border border-white bg-[#d4481c] text-white font-bold leading-none font-['DejaVu_Sans',sans-serif]">
            S
          </button>
          <svg viewBox="0 0 8 14" className="w-2 h-[14px]">
            <path d="M2 1H7V3H2ZM1 10H7L4 13Z" fill="#fff" />
          </svg>
        </div>
      </footer>
    </div>
  );
}

export default App;
